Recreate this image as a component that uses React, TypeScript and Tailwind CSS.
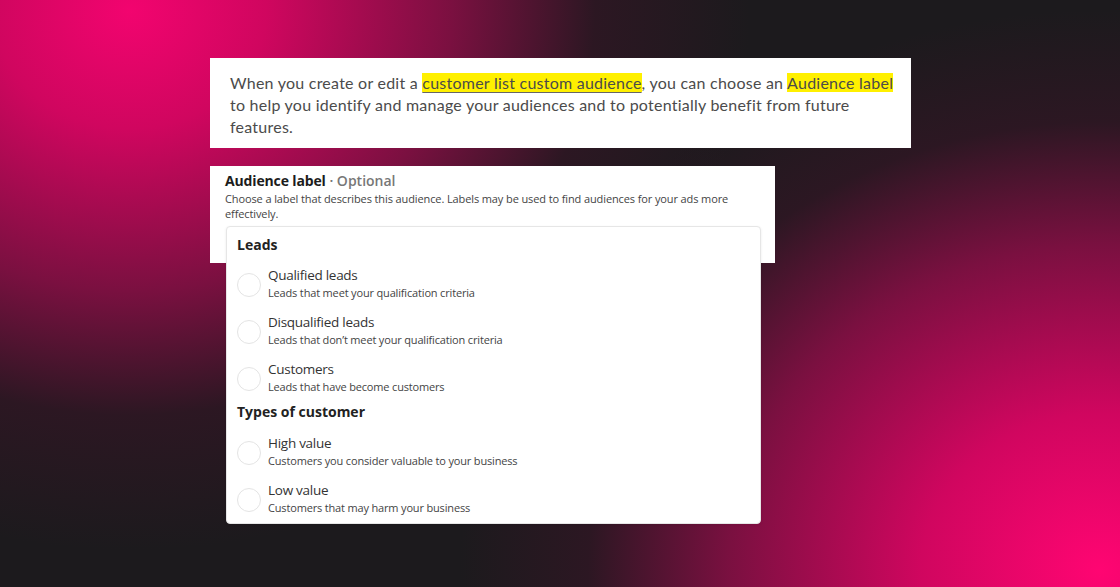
import React from 'react';

const LEADS = [
  { title: 'Qualified leads', hint: 'Leads that meet your qualification criteria' },
  { title: 'Disqualified leads', hint: 'Leads that don’t meet your qualification criteria' },
  { title: 'Customers', hint: 'Leads that have become customers' },
];

const CUSTOMER_TYPES = [
  { title: 'High value', hint: 'Customers you consider valuable to your business' },
  { title: 'Low value', hint: 'Customers that may harm your business' },
];

const Option = ({ title, hint }: { title: string; hint: string }) => (
  <div className="flex items-center gap-[7px] h-[47px]">
    <span className="w-[24px] h-[24px] rounded-full border border-[#e4e4e4] shrink-0" />
    <div className="flex flex-col -mt-[2px]">
      <span className="text-[13.5px] leading-[17px] text-[#333] tracking-[-0.02em]">{title}</span>
      <span className="text-[11px] leading-[17px] text-[#444] tracking-[-0.015em]">{hint}</span>
    </div>
  </div>
);

export default function App() {
  return (
    <div className="relative w-full h-[587px] overflow-hidden bg-[#1c1a1d] bg-[radial-gradient(ellipse_620px_540px_at_130px_10px,#f2046f_0%,#d0065f_22%,#7a1040_52%,rgba(60,20,40,0.5)_75%,transparent_100%),radial-gradient(ellipse_640px_560px_at_1100px_570px,#ff0572_0%,#d0065f_28%,#7a1040_58%,rgba(60,20,40,0.5)_80%,transparent_100%)] font-['Open_Sans',sans-serif]">
      <div className="flex flex-col pl-[210px] pt-[58px] gap-[18px]">
        <div className="w-[701px] h-[90px] bg-white pl-[20px] pr-[8px] pt-[14px] text-[16px] leading-[22px] text-[#4b4b4b] font-['Lato',sans-serif] tracking-[0.015em]">
          <span className="whitespace-nowrap">
            When you create or edit a{' '}
            <span className="bg-[#fff000] underline decoration-[#666] underline-offset-[3px]">customer list custom audience</span>, you can choose an{' '}
            <span className="bg-[#fff000]">Audience label</span>
          </span>
          <br />
          to help you identify and manage your audiences and to potentially benefit from future
          <br />
          features.
        </div>

        <div className="relative w-[565px] h-[97px] bg-white px-[15px] pt-[6px]">
          <div className="text-[14px] leading-[18px]">
            <span className="font-bold text-[#1c1c1c] tracking-[-0.01em]">Audience label</span>
            <span className="font-semibold text-[#777]"> · Optional</span>
          </div>
          <p className="mt-[1px] text-[11px] leading-[15px] text-[#444] tracking-[-0.01em] w-[520px]">
            Choose a label that describes this audience. Labels may be used to find audiences for your ads more effectively.
          </p>

          {/* dropdown menu opened over the field */}
          <div className="absolute left-[16px] top-[60px] w-[535px] h-[298px] bg-white rounded-[4px] border border-[#e6e6e6] shadow-[0_1px_3px_rgba(0,0,0,0.08)] px-[10px] pt-[6px]">
            <div className="text-[14px] leading-[24px] font-bold text-[#222]">Leads</div>
            <div className="mt-[4px] flex flex-col">
              {LEADS.map((o) => (
                <Option key={o.title} {...o} />
              ))}
            </div>
            <div className="-mt-[2px] text-[14px] leading-[24px] font-bold text-[#222]">Types of customer</div>
            <div className="mt-[5px] flex flex-col">
              {CUSTOMER_TYPES.map((o) => (
                <Option key={o.title} {...o} />
              ))}
            </div>
          </div>
        </div>
      </div>
    </div>
  );
}
